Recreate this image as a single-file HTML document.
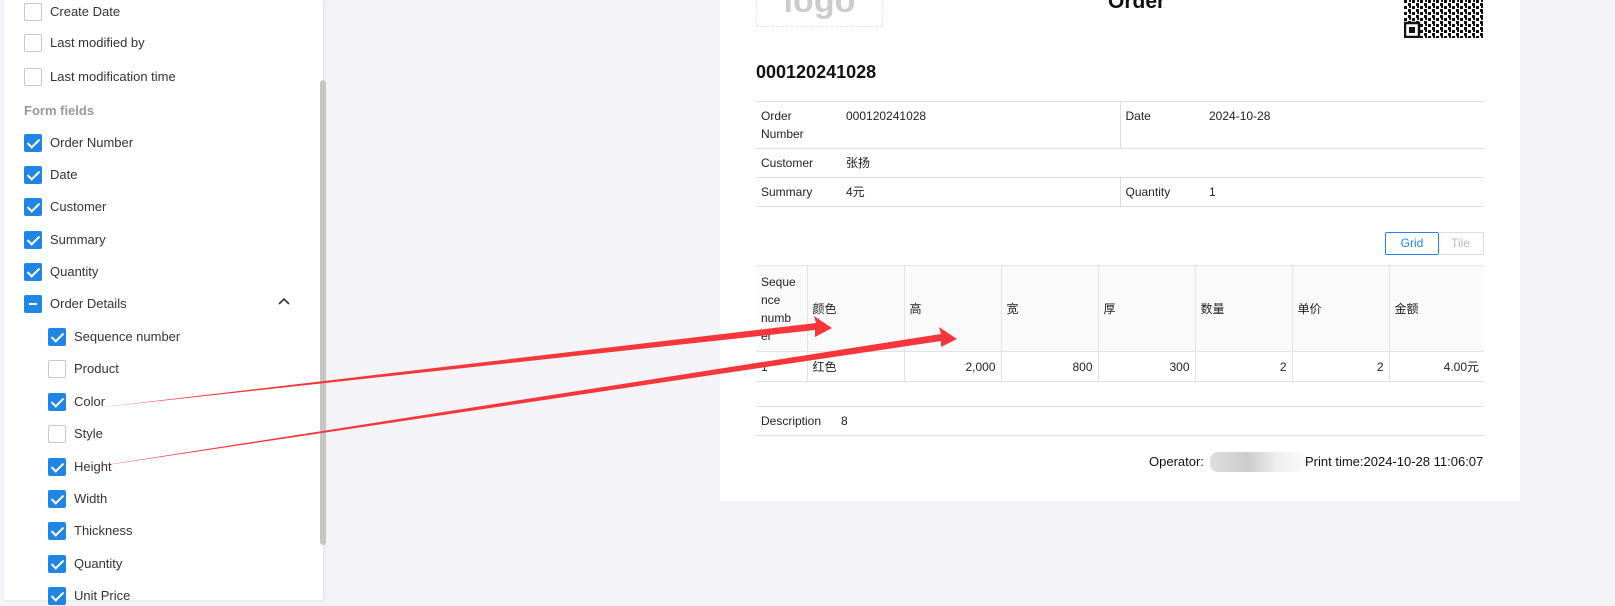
<!DOCTYPE html>
<html><head><meta charset="utf-8"><style>
*{margin:0;padding:0;box-sizing:border-box}
body{width:1615px;height:593px;overflow:hidden;background:#f3f3f8;font-family:"Liberation Sans","Noto Sans CJK SC",sans-serif;color:#222;position:relative}
.side{position:absolute;left:4px;top:0;width:319px;height:600px;background:#fff;box-shadow:1px 0 3px rgba(0,0,0,.08)}
.sb{position:absolute;left:316px;top:80px;width:6px;height:465px;background:#c6c6c6;border-radius:3px}
.row{position:absolute;height:20px;font-size:13px;line-height:18px;display:flex;align-items:center;color:#333}
.cb{width:18px;height:18px;border:1px solid #c8c8c8;border-radius:2px;margin-right:8px;background:#fff;position:relative;flex:none}
.cb.on{background:#2185e3;border-color:#2185e3}
.cb.on:after{content:"";position:absolute;left:5px;top:1px;width:5px;height:10px;border:solid #fff;border-width:0 2px 2px 0;transform:rotate(45deg)}
.cb.ind{background:#2185e3;border-color:#2185e3}
.cb.ind:after{content:"";position:absolute;left:4px;top:7px;width:8px;height:2px;background:#fff}
.lbl{position:absolute;left:24px;top:103px;font-size:13px;color:#999;font-weight:bold}
.page{position:absolute;left:720px;top:0;width:800px;height:501px;background:#fff}
.abs{position:absolute}
table{border-collapse:collapse;font-size:12px}
.info{position:absolute;left:756px;top:101px;width:728px}
.info td{border-top:1px solid #ddd;border-bottom:1px solid #ddd;vertical-align:top;padding:5px 5px;line-height:18px}
.det{position:absolute;left:756px;top:265px;width:728px;table-layout:fixed}
.det td{border:1px solid #e3e3e3;padding:0 5px;font-size:12px}
.det tr.h td{background:#fafafa;height:86px;line-height:18px}
.det tr.b td{height:30px;text-align:right}
</style></head><body>
<div class="side">
<div class="sb"></div>
</div>
<div class="row" style="left:24px;top:2px"><span class="cb"></span>Create Date</div>
<div class="row" style="left:24px;top:33px"><span class="cb"></span>Last modified by</div>
<div class="row" style="left:24px;top:67px"><span class="cb"></span>Last modification time</div>
<div class="lbl">Form fields</div>
<div class="row" style="left:24px;top:133px"><span class="cb on"></span>Order Number</div>
<div class="row" style="left:24px;top:165px"><span class="cb on"></span>Date</div>
<div class="row" style="left:24px;top:197px"><span class="cb on"></span>Customer</div>
<div class="row" style="left:24px;top:230px"><span class="cb on"></span>Summary</div>
<div class="row" style="left:24px;top:262px"><span class="cb on"></span>Quantity</div>
<div class="row" style="left:24px;top:294px"><span class="cb ind"></span>Order Details</div>
<svg class="abs" style="left:278px;top:297px" width="12" height="10"><path d="M1 7 L6 2 L11 7" stroke="#333" stroke-width="1.6" fill="none"/></svg>
<div class="row" style="left:48px;top:327px"><span class="cb on"></span>Sequence number</div>
<div class="row" style="left:48px;top:359px"><span class="cb"></span>Product</div>
<div class="row" style="left:48px;top:392px"><span class="cb on"></span>Color</div>
<div class="row" style="left:48px;top:424px"><span class="cb"></span>Style</div>
<div class="row" style="left:48px;top:457px"><span class="cb on"></span>Height</div>
<div class="row" style="left:48px;top:489px"><span class="cb on"></span>Width</div>
<div class="row" style="left:48px;top:521px"><span class="cb on"></span>Thickness</div>
<div class="row" style="left:48px;top:554px"><span class="cb on"></span>Quantity</div>
<div class="row" style="left:48px;top:586px"><span class="cb on"></span>Unit Price</div>

<div class="page"></div>
<div class="abs" style="left:756px;top:-20px;width:127px;height:47px;border:1px dashed #e6e6e6;font-size:34px;font-weight:bold;color:#ccc;text-align:center;line-height:40px">logo</div>
<div class="abs" style="left:1108px;top:-10px;font-size:21px;font-weight:bold;color:#111">Order</div>
<svg class="abs" style="left:1404px;top:0" width="80" height="38">
<rect width="80" height="38" fill="#fff"/>
<rect x="0" y="0" width="80" height="38" fill="url(#q)"/>
<defs><pattern id="q" width="8" height="6" patternUnits="userSpaceOnUse"><rect width="3" height="3" fill="#111"/><rect x="4" y="3" width="3" height="3" fill="#111"/><rect x="5" y="0" width="2" height="2" fill="#111"/></pattern></defs>
<rect x="1" y="23" width="14" height="14" fill="#fff" stroke="#111" stroke-width="2.5"/><rect x="5" y="27" width="6" height="6" fill="#111"/>
</svg>
<div class="abs" style="left:756px;top:62px;font-size:18px;font-weight:bold;color:#111">000120241028</div>
<table class="info">
<tr><td style="width:85px;height:47px">Order<br>Number</td><td style="width:279px">000120241028</td><td style="width:84px;border-left:1px solid #ddd">Date</td><td>2024-10-28</td></tr>
<tr><td style="height:29px">Customer</td><td colspan="3">张扬</td></tr>
<tr><td style="height:29px">Summary</td><td>4元</td><td style="border-left:1px solid #ddd">Quantity</td><td>1</td></tr>
</table>
<div class="abs" style="left:1385px;top:232px;width:54px;height:23px;border:1px solid #2185e3;color:#2185e3;font-size:12px;text-align:center;line-height:21px;border-radius:2px 0 0 2px">Grid</div>
<div class="abs" style="left:1438px;top:232px;width:46px;height:23px;border:1px solid #ddd;border-left:none;color:#bbb;font-size:12px;text-align:center;line-height:21px">Tile</div>
<table class="det">
<colgroup><col style="width:51px"><col style="width:97px"><col style="width:97px"><col style="width:97px"><col style="width:97px"><col style="width:97px"><col style="width:97px"><col></colgroup>
<tr class="h"><td style="border-left:none">Seque<br>nce<br>numb<br>er</td><td>颜色</td><td>高</td><td>宽</td><td>厚</td><td>数量</td><td>单价</td><td style="border-right:none">金额</td></tr>
<tr class="b"><td style="text-align:left;border-left:none">1</td><td style="text-align:left">红色</td><td>2,000</td><td>800</td><td>300</td><td>2</td><td>2</td><td style="border-right:none">4.00元</td></tr>
</table>
<div class="abs" style="left:756px;top:406px;width:728px;height:30px;border-top:1px solid #ddd;border-bottom:1px solid #ddd;font-size:12px;line-height:28px;padding-left:5px">Description<span style="margin-left:20px">8</span></div>
<div class="abs" style="left:1149px;top:454px;font-size:13px;color:#111">Operator:</div>
<div class="abs" style="left:1210px;top:452px;width:95px;height:20px;background:linear-gradient(90deg,#ddd,#ccc 40%,#eee 70%,#fafafa);border-radius:8px"></div>
<div class="abs" style="left:1305px;top:454px;font-size:13px;color:#111">Print time:2024-10-28 11:06:07</div>
<svg class="abs" style="left:0;top:0" width="1615" height="593">
<polygon points="95,408 816,323 814,316 832,328 815,337 815,330" fill="#f5373b"/>
<polygon points="80,469 941,334 939,327 957,339 941,347 941,341" fill="#f5373b"/>
</svg>
</body></html>
